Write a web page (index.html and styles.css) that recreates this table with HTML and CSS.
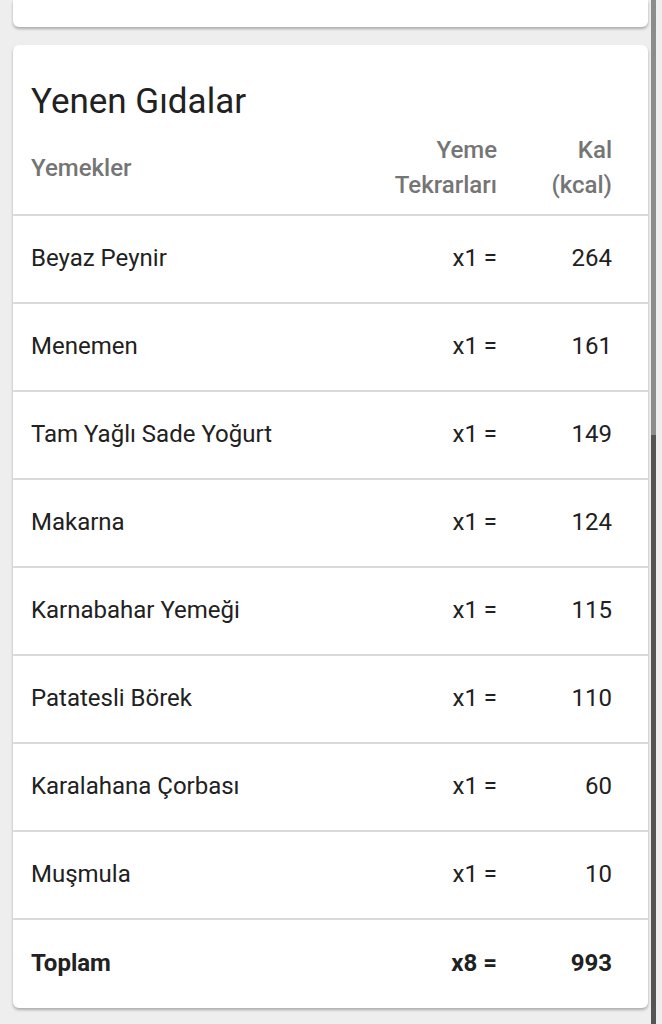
FILE: index.html
```html
<!DOCTYPE html>
<html lang="tr">
<head>
  <meta charset="UTF-8" />
  <meta name="viewport" content="width=device-width, initial-scale=1.0" />
  <title>Yenen Gıdalar</title>
  <link rel="stylesheet" href="styles.css">
</head>
<body>

  <div class="page">
    <div class="card card-top"></div>

    <div class="card foods">
      <h2>Yenen Gıdalar</h2>

      <div class="row head">
        <div>Yemekler</div>
        <div class="num">Yeme<br>Tekrarları</div>
        <div class="num">Kal<br>(kcal)</div>
      </div>

      <div class="row"><div>Beyaz Peynir</div><div class="num">x1 =</div><div class="num">264</div></div>
      <div class="row"><div>Menemen</div><div class="num">x1 =</div><div class="num">161</div></div>
      <div class="row"><div>Tam Yağlı Sade Yoğurt</div><div class="num">x1 =</div><div class="num">149</div></div>
      <div class="row"><div>Makarna</div><div class="num">x1 =</div><div class="num">124</div></div>
      <div class="row"><div>Karnabahar Yemeği</div><div class="num">x1 =</div><div class="num">115</div></div>
      <div class="row"><div>Patatesli Börek</div><div class="num">x1 =</div><div class="num">110</div></div>
      <div class="row"><div>Karalahana Çorbası</div><div class="num">x1 =</div><div class="num">60</div></div>
      <div class="row"><div>Muşmula</div><div class="num">x1 =</div><div class="num">10</div></div>

      <div class="row total"><div>Toplam</div><div class="num">x8 =</div><div class="num">993</div></div>
    </div>
  </div>

  <div class="scrollbar">
    <div class="track"></div>
    <div class="thumb"></div>
  </div>

</body>
</html>
```

FILE: styles.css
```css
body {
  margin: 0;
  font-family: Roboto, "Noto Sans", sans-serif;
  background-color: #eeeeee;
  color: #212121;
  display: flex;
  height: 1024px;
  overflow: hidden;
}
.page {
  width: 635px;
  padding: 0 3px 0 13px;
}
.card {
  background: #fff;
  border-radius: 6px;
  box-shadow: 0 2px 3px rgba(0, 0, 0, 0.28);
}
.card-top {
  height: 27px;
  border-radius: 0 0 6px 6px;
}
.foods {
  margin-top: 18px;
  padding-top: 37px;
}
.foods h2 {
  margin: 0;
  padding-left: 18px;
  font-size: 35px;
  line-height: 40px;
  font-weight: 400;
}
.row {
  display: grid;
  grid-template-columns: 1fr auto 115px;
  align-items: center;
  height: 84px;
  padding: 0 36px 2px 18px;
  border-bottom: 2px solid #dadada;
  font-size: 24px;
}
.row .num {
  text-align: right;
}
.head {
  height: 92px;
  padding-bottom: 0;
  color: #757575;
  font-weight: 500;
  line-height: 35px;
}
.total {
  height: 86px;
  border-bottom: none;
  font-weight: 700;
}
.scrollbar {
  width: 5px;
  display: flex;
  flex-direction: column;
}
.track {
  height: 435px;
  background: #8c8c8c;
}
.thumb {
  flex: 1;
  background: #555;
}
```
